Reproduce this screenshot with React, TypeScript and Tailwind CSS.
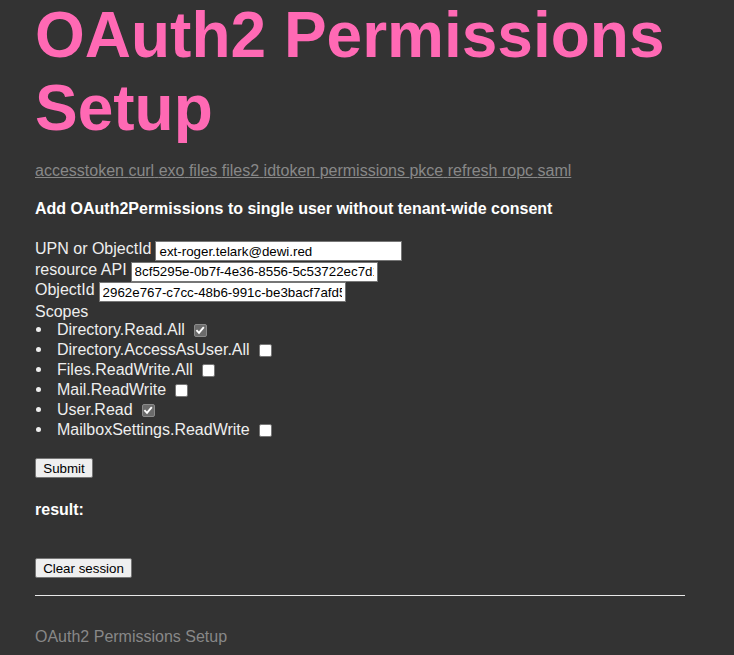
const LINKS = [
  "accesstoken",
  "curl",
  "exo",
  "files",
  "files2",
  "idtoken",
  "permissions",
  "pkce",
  "refresh",
  "ropc",
  "saml",
];

const FIELDS = [
  { label: "UPN or ObjectId", value: "ext-roger.telark@dewi.red" },
  { label: "resource API", value: "8cf5295e-0b7f-4e36-8556-5c53722ec7d1" },
  { label: "ObjectId", value: "2962e767-c7cc-48b6-991c-be3bacf7afd5" },
];

const SCOPES = [
  { name: "Directory.Read.All", checked: true },
  { name: "Directory.AccessAsUser.All", checked: false },
  { name: "Files.ReadWrite.All", checked: false },
  { name: "Mail.ReadWrite", checked: false },
  { name: "User.Read", checked: true },
  { name: "MailboxSettings.ReadWrite", checked: false },
];

function Checkbox({ checked }: { checked: boolean }) {
  if (checked) {
    return (
      <span className="ml-[9px] mt-[1px] flex h-[13px] w-[13px] items-center justify-center rounded-[2px] border border-[#8a8a8a] bg-[#6b6b6b]">
        <svg viewBox="0 0 10 10" className="h-[10px] w-[10px]" aria-hidden>
          <path d="M1.4 5.2 L4 7.8 L8.8 2.2" fill="none" stroke="#ffffff" strokeWidth="1.9" />
        </svg>
      </span>
    );
  }
  return (
    <span className="ml-[9px] mt-[1px] block h-[13px] w-[13px] rounded-[2px] border border-[#767676] bg-white" />
  );
}

export default function App() {
  return (
    <div className="min-h-screen bg-[#333333] font-['Liberation_Sans',Arial,sans-serif] text-[16px] text-[#eeeeee]">
      <div className="ml-[35px] w-[650px]">
        <h1 className="-mt-[1px] text-[64px] font-bold leading-[73px] text-[#ff69b4]">
          OAuth2 Permissions Setup
        </h1>

        <div className="mt-[17px] leading-[18px]">
          {LINKS.map((l, i) => (
            <a key={l} href="#" className="text-[#888888] underline">
              {l}
              {i < LINKS.length - 1 ? " " : ""}
            </a>
          ))}
        </div>

        <h4 className="mt-[20px] font-bold leading-[18px] text-white">
          Add OAuth2Permissions to single user without tenant-wide consent
        </h4>

        <div className="mt-[23px]">
          {FIELDS.map((f) => (
            <div key={f.label} className="flex h-[20.5px] items-start">
              <span className="-mt-[1px] mr-[4px] leading-[18px]">{f.label}</span>
              <input
                readOnly
                defaultValue={f.value}
                className="h-[20px] w-[247px] border border-[#767676] bg-white px-[3px] text-[13.33px] text-black outline-none"
              />
            </div>
          ))}
          <div className="leading-[18px]">Scopes</div>
        </div>

        <ul className="-mt-[1px]">
          {SCOPES.map((s) => (
            <li key={s.name} className="flex h-[20px] items-center leading-[20px]">
              <span className="ml-[1px] mr-[16px] h-[5px] w-[5px] rounded-full bg-[#eeeeee]" />
              <span>{s.name}</span>
              <Checkbox checked={s.checked} />
            </li>
          ))}
        </ul>

        <button className="mt-[18px] block h-[20px] w-[58px] rounded-[2px] border border-[#767676] bg-[#efefef] text-center text-[13.33px] text-black">
          Submit
        </button>

        <div className="mt-[23px] font-bold leading-[18px] text-white">result:</div>

        <button className="mt-[39px] block h-[20px] w-[97px] rounded-[2px] border border-[#767676] bg-[#efefef] text-center text-[13.33px] text-black">
          Clear session
        </button>

        <hr className="mt-[17px] border-t border-[#e8e8e8]" />

        <div className="mt-[32px] pb-[12px] leading-[18px] text-[#888888]">
          OAuth2 Permissions Setup
        </div>
      </div>
    </div>
  );
}
